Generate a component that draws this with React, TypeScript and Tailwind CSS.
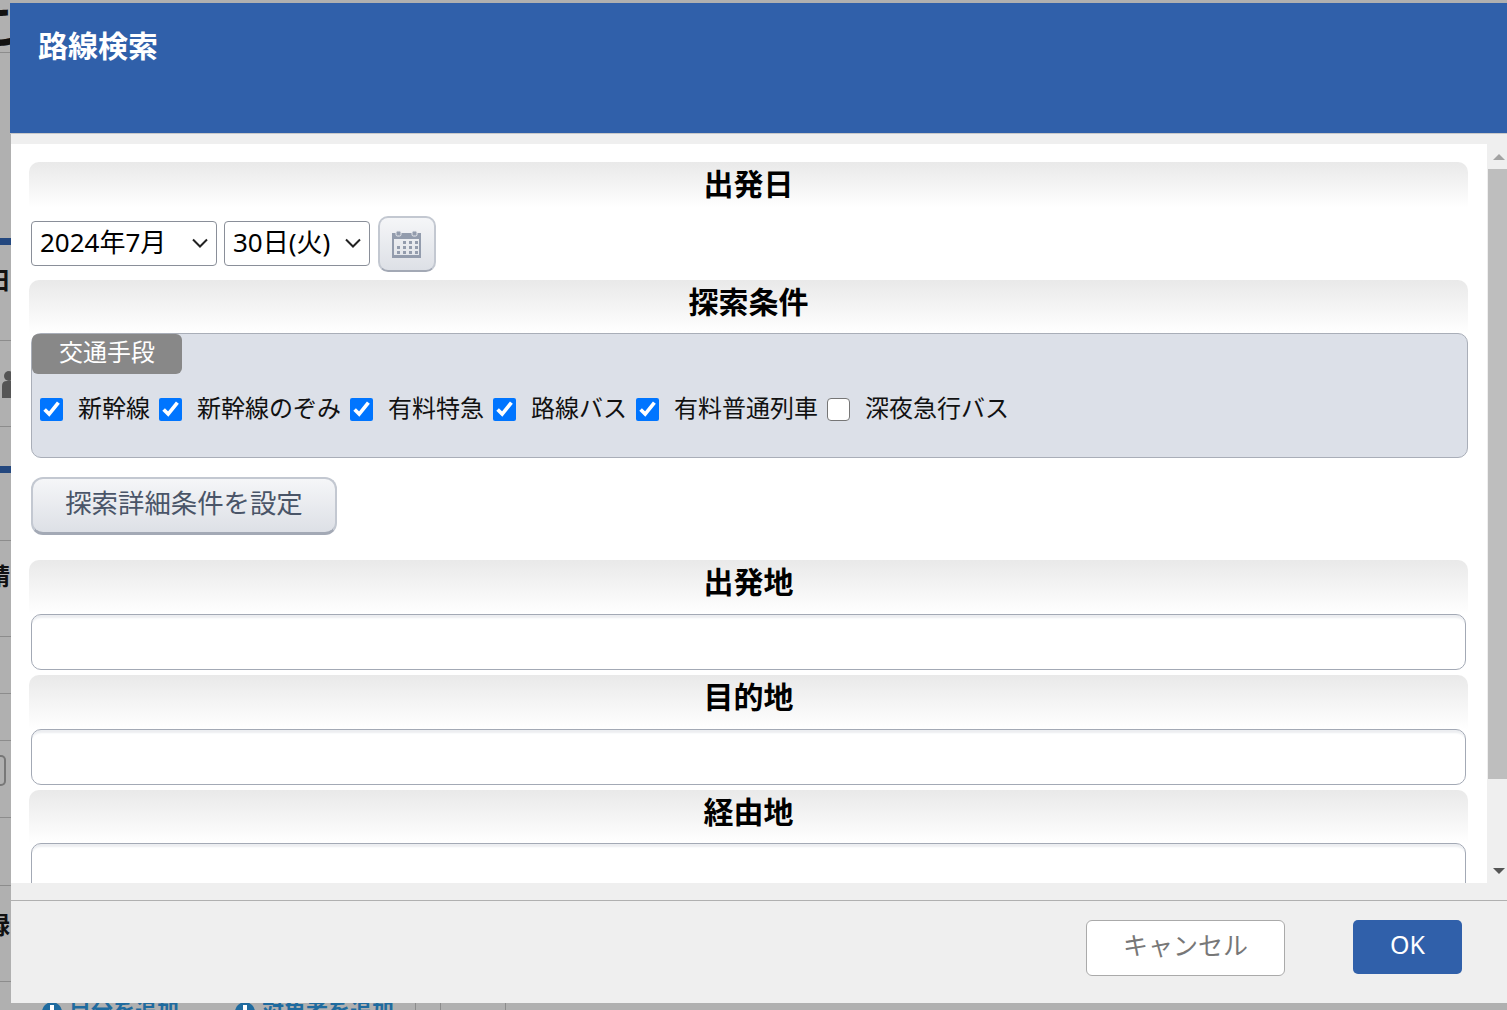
import React from "react";

const font = { fontFamily: '"Noto Sans","Noto Sans CJK JP",sans-serif' };

function SectionHead({ title, h }: { title: string; h: string }) {
  return (
    <div className={`${h} ml-[18px] w-[1439px] shrink-0 rounded-t-[10px] bg-gradient-to-b from-[#e9e9e9] to-white text-center text-[30px] font-bold leading-[44px] text-black`}>
      {title}
    </div>
  );
}

function Check({ label, checked = true }: { label: string; checked?: boolean }) {
  return (
    <label className="flex items-center">
      <input
        type="checkbox"
        defaultChecked={checked}
        className={
          checked
            ? "m-0 mt-[2px] h-[23px] w-[23px] accent-[#0075ff]"
            : "m-0 mt-[2px] h-[23px] w-[23px] appearance-none rounded-[4px] border-[1.5px] border-[#767676] bg-white"
        }
      />
      <span className="ml-[15px] mr-[9px] text-[24px] leading-[36px] text-[#111]">{label}</span>
    </label>
  );
}

function TextBox({ mb = "mb-[5px]" }: { mb?: string }) {
  return (
    <input
      type="text"
      className={`ml-[20px] ${mb} h-[56px] w-[1435px] shrink-0 rounded-[10px] border border-[#a3a9b5] bg-white shadow-[inset_0_5px_2px_-2px_#eceef1]`}
    />
  );
}

function CalendarIcon() {
  return (
    <svg width="32" height="30" viewBox="0 0 32 30" fill="#939cad">
      <path d="M1 4h29v25H1z M3 10v16h25V10z" fillRule="evenodd" />
      <rect x="5" y="2" width="5" height="5" rx="1.5" stroke="#e9ebef" strokeWidth="1" />
      <rect x="21" y="2" width="5" height="5" rx="1.5" stroke="#e9ebef" strokeWidth="1" />
      {[12, 17, 22].map((y) =>
        [6, 12, 18, 24].map((x) =>
          x === 6 && y === 12 ? null : <rect key={`${x}-${y}`} x={x} y={y} width="3" height="3" />
        )
      )}
    </svg>
  );
}

function Select({ label, w }: { label: string; w: string }) {
  return (
    <div className={`relative mt-[13px] h-[45px] ${w}`}>
      <select
        defaultValue="a"
        className="h-full w-full appearance-none rounded-[4px] border border-[#8a8f99] bg-white pb-[3px] pl-[8px] text-[26px] text-black"
      >
        <option value="a">{label}</option>
      </select>
      <svg className="pointer-events-none absolute right-[9px] top-[17px]" width="16" height="10" viewBox="0 0 16 10" fill="none" stroke="#222" strokeWidth="2">
        <path d="M1 1.5l7 7 7-7" />
      </svg>
    </div>
  );
}

function AddLink({ label }: { label: string }) {
  return (
    <span className="flex items-start gap-[7px]">
      <span className="relative mt-[8px] h-[20px] w-[20px] rounded-full bg-[#1f6b9f]">
        <span className="absolute left-[8px] top-[3px] h-[14px] w-[4px] bg-white" />
      </span>
      {label}
    </span>
  );
}

export default function App() {
  return (
    <div style={font} className="relative h-[1010px] w-full overflow-hidden bg-[#b0b0b0]">
      {/* page behind the dialog */}
      <div className="w-[11px] overflow-hidden">
        <div className="h-[53px] overflow-hidden whitespace-nowrap border-b border-[#8c8c8c]">
          <div className="-ml-[28px] w-[60px] text-[46px] font-bold leading-[50px] text-[#111]">こ</div>
        </div>
        <div className="h-[185px]" />
        <div className="h-[7px] bg-[#24487f]" />
        <div className="-ml-[13px] h-[96px] w-[40px] whitespace-nowrap border-b border-[#8c8c8c] pt-[20px] text-[24px] font-bold leading-[30px] text-[#111]">日</div>
        <div className="flex h-[86px] items-center border-b border-[#8c8c8c]">
          <svg width="11" height="28" viewBox="0 0 11 28" fill="#555" className="shrink-0"><circle cx="9" cy="6" r="5" /><path d="M2 28v-12q0-5 5-5h4v17z" /></svg>
        </div>
        <div className="h-[39px]" />
        <div className="h-[7px] bg-[#24487f]" />
        <div className="h-[68px] border-b border-[#8c8c8c]" />
        <div className="-ml-[14px] h-[96px] w-[40px] whitespace-nowrap border-b border-[#8c8c8c] pt-[20px] text-[24px] font-bold leading-[30px] text-[#111]">請</div>
        <div className="h-[57px] border-b border-[#8c8c8c]" />
        <div className="h-[47px] border-b border-[#8c8c8c]" />
        <div className="h-[77px] border-b border-[#8c8c8c] pt-[14px]">
          <div className="h-[31px] w-[6px] rounded-r-[5px] border-2 border-l-0 border-[#777]" />
        </div>
        <div className="h-[68px] border-b border-[#8c8c8c]" />
        <div className="-ml-[14px] h-[96px] w-[40px] whitespace-nowrap border-b border-[#8c8c8c] pt-[24px] text-[24px] font-bold leading-[30px] text-[#111]">録</div>
      </div>
      <div className="absolute left-[42px] top-[994px] flex items-start gap-[56px] whitespace-nowrap text-[22px] font-bold leading-[30px] text-[#1f6b9f]">
        <AddLink label="目分を追加" />
        <AddLink label="対象者を追加" />
      </div>
      <div className="absolute left-[415px] top-[1003px] h-[7px] w-px bg-[#8c8c8c]" />
      <div className="absolute left-[440px] top-[1003px] h-[7px] w-px bg-[#8c8c8c]" />
      <div className="absolute left-[505px] top-[1003px] h-[7px] w-px bg-[#8c8c8c]" />

      {/* dialog */}
      <div className="absolute left-[11px] top-[3px] flex h-[1000px] w-[1496px] flex-col bg-[#efefef]">
        <div className="-ml-px h-[131px] shrink-0 border-b border-[#c9c9c9] bg-[#3060aa] pl-[28px] pt-[21px] text-[30px] font-bold leading-[44px] text-white">
          路線検索
        </div>
        <div className="mt-[10px] flex h-[739px] shrink-0">
          <div className="flex h-full w-[1476px] flex-col overflow-hidden bg-white pt-[18px]">
            <SectionHead title="出発日" h="h-[46px]" />
            <div className="ml-[20px] flex h-[72px] shrink-0 items-start">
              <Select label="2024年7月" w="w-[186px]" />
              <div className="ml-[7px]"><Select label="30日(火)" w="w-[146px]" /></div>
              <button className="ml-[8px] mt-[8px] flex h-[56px] w-[58px] items-center justify-center rounded-[10px] border-2 border-[#c3c8d1] border-b-[#a3a9b5] bg-gradient-to-b from-[#f5f6f8] to-[#dde0e6]">
                <CalendarIcon />
              </button>
            </div>
            <SectionHead title="探索条件" h="h-[53px]" />
            <div className="ml-[20px] h-[125px] w-[1437px] shrink-0 rounded-[10px] border border-[#a9aeb8] bg-[#dce0e8]">
              <div className="flex h-[40px] w-[150px] items-center justify-center rounded-[6px] bg-[#888] pb-[4px] text-[24px] text-white">交通手段</div>
              <div className="ml-[8px] mt-[16px] flex items-center">
                <Check label="新幹線" />
                <Check label="新幹線のぞみ" />
                <Check label="有料特急" />
                <Check label="路線バス" />
                <Check label="有料普通列車" />
                <Check label="深夜急行バス" checked={false} />
              </div>
            </div>
            <button className="ml-[20px] mt-[19px] h-[58px] w-[306px] shrink-0 rounded-[12px] border-2 border-[#c3c8d1] border-b-[3px] border-b-[#a3a9b5] bg-gradient-to-b from-[#f5f6f8] to-[#dde0e6] pb-[4px] text-[26.4px] text-[#4a5568]">
              探索詳細条件を設定
            </button>
            <div className="h-[25px] shrink-0" />
            <SectionHead title="出発地" h="h-[54px]" />
            <TextBox />
            <SectionHead title="目的地" h="h-[54px]" />
            <TextBox />
            <SectionHead title="経由地" h="h-[53px]" />
            <TextBox />
          </div>
          <div className="relative w-[20px] shrink-0">
            <div className="absolute left-[6px] top-[10px] h-0 w-0 border-x-[6px] border-b-[6px] border-x-transparent border-b-[#a3a3a3]" />
            <div className="absolute left-px top-[25px] h-[610px] w-[19px] bg-[#bebebe]" />
            <div className="absolute bottom-[9px] left-[6px] h-0 w-0 border-x-[6px] border-t-[6px] border-x-transparent border-t-[#555]" />
          </div>
        </div>
        <div className="mt-[17px] flex flex-1 items-start border-t border-[#b0b0b0] pl-[1075px] pt-[19px]">
          <button className="h-[56px] w-[199px] rounded-[6px] border border-[#aaa] bg-white pb-[4px] text-[25px] text-[#777]">キャンセル</button>
          <button className="ml-[68px] h-[54px] w-[109px] rounded-[5px] bg-[#3060aa] pb-[4px] text-[25px] text-white">OK</button>
        </div>
      </div>
    </div>
  );
}
